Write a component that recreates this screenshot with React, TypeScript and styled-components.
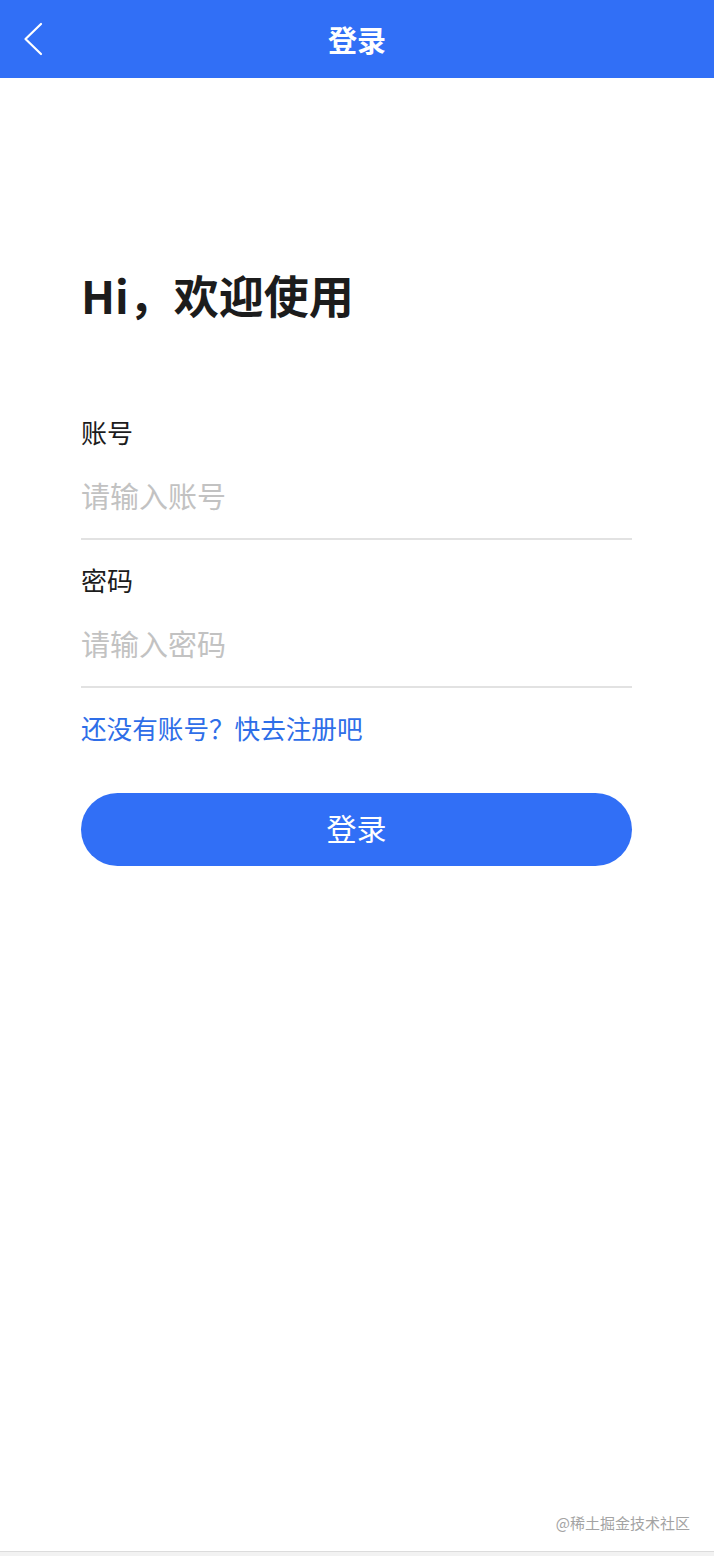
import styled, { createGlobalStyle } from 'styled-components';

const GlobalStyle = createGlobalStyle`
  html, body {
    margin: 0;
    padding: 0;
    background: #ffffff;
  }
  body {
    font-family: "Noto Sans CJK SC", "Noto Sans", sans-serif;
  }
  * {
    box-sizing: border-box;
  }
`;

const Page = styled.div`
  min-height: 100vh;
  display: flex;
  flex-direction: column;
`;

const NavBar = styled.header`
  height: 78px;
  background-color: #316ff6;
  display: grid;
  grid-template-columns: 1fr auto 1fr;
  align-items: center;
`;

const BackButton = styled.button`
  justify-self: start;
  margin-left: 23px;
  padding: 0;
  border: none;
  background: none;
  display: flex;
  cursor: pointer;
`;

const NavTitle = styled.h1`
  margin: 0;
  color: #ffffff;
  font-size: 29px;
  font-weight: 700;
  line-height: 40px;
`;

const Main = styled.main`
  flex: 1;
  padding: 187px 82px 0 81px;
  display: flex;
  flex-direction: column;
`;

const Greeting = styled.h2`
  margin: 0 0 89px;
  font-size: 45px;
  font-weight: 600;
  line-height: 60px;
  color: #1c1c1c;
`;

const Field = styled.label`
  display: flex;
  flex-direction: column;
  gap: 6px;
  & + & {
    margin-top: 22px;
  }
`;

const FieldLabel = styled.span`
  font-size: 26px;
  line-height: 36px;
  color: #1c1c1c;
`;

const TextInput = styled.input`
  height: 84px;
  padding: 0 0 4px;
  border: none;
  border-bottom: 2px solid #e2e2e2;
  outline: none;
  font-family: inherit;
  font-size: 29px;
  color: #1c1c1c;
  background: transparent;
  &::placeholder {
    color: #c2c2c2;
  }
`;

const RegisterLink = styled.a`
  margin-top: 22px;
  font-size: 25.6px;
  line-height: 36px;
  color: #2e6ee8;
  text-decoration: none;
  align-self: flex-start;
`;

const SubmitButton = styled.button`
  margin-top: 47px;
  height: 73px;
  padding: 0 0 5px;
  border: none;
  border-radius: 37px;
  background-color: #316ff6;
  color: #ffffff;
  font-family: inherit;
  font-size: 30px;
  cursor: pointer;
`;

const Watermark = styled.div`
  padding: 0 24px 18px 0;
  text-align: right;
  font-size: 15px;
  line-height: 20px;
  color: #a3a3a3;
`;

const BottomBar = styled.div`
  height: 5px;
  border-top: 1px solid #dcdcdc;
  background-color: #f2f2f2;
`;

const ChevronLeft = () => (
  <svg width="20" height="34" viewBox="0 0 20 34" fill="none">
    <path
      d="M18 2 L2.5 17 L18 32"
      stroke="#ffffff"
      strokeWidth="2.2"
      strokeLinecap="round"
      strokeLinejoin="round"
    />
  </svg>
);

export default function App() {
  return (
    <Page>
      <GlobalStyle />
      <NavBar>
        <BackButton aria-label="返回">
          <ChevronLeft />
        </BackButton>
        <NavTitle>登录</NavTitle>
        <span />
      </NavBar>
      <Main>
        <Greeting>Hi，欢迎使用</Greeting>
        <Field>
          <FieldLabel>账号</FieldLabel>
          <TextInput type="text" placeholder="请输入账号" />
        </Field>
        <Field>
          <FieldLabel>密码</FieldLabel>
          <TextInput type="password" placeholder="请输入密码" />
        </Field>
        <RegisterLink href="#">还没有账号？快去注册吧</RegisterLink>
        <SubmitButton>登录</SubmitButton>
      </Main>
      <Watermark>@稀土掘金技术社区</Watermark>
      <BottomBar />
    </Page>
  );
}
